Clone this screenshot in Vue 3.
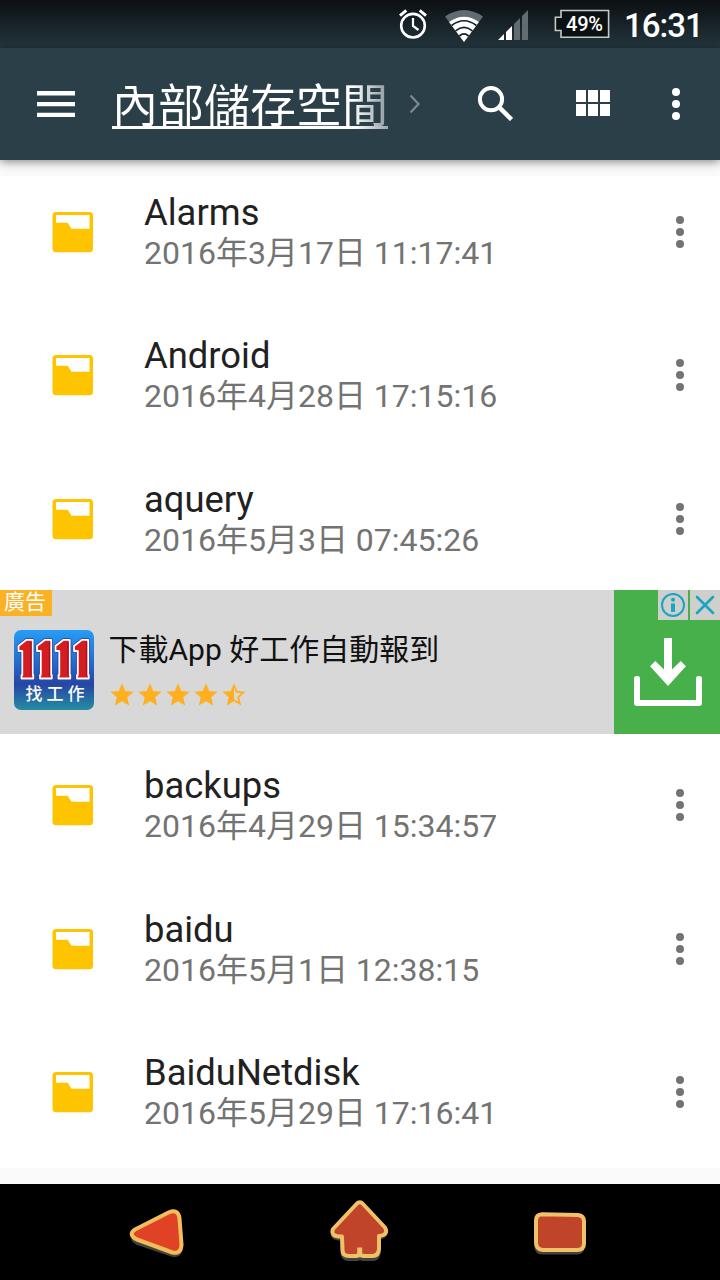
<script setup>
const before = [
  { name: 'Alarms', date: '2016年3月17日 11:17:41' },
  { name: 'Android', date: '2016年4月28日 17:15:16' },
  { name: 'aquery', date: '2016年5月3日 07:45:26' },
]
const after = [
  { name: 'backups', date: '2016年4月29日 15:34:57' },
  { name: 'baidu', date: '2016年5月1日 12:38:15' },
  { name: 'BaiduNetdisk', date: '2016年5月29日 17:16:41' },
]
const rows = [...before, { ad: true, name: 'ad' }, ...after]
const star = 'M12 17.27 18.18 21l-1.64-7.03L22 9.24l-7.19-.61L12 2 9.19 8.63 2 9.24l5.46 4.73L5.82 21z'
const halfStar = 'M22 9.24l-7.19-.62L12 2 9.19 8.63 2 9.24l5.46 4.73L5.82 21 12 17.27 18.18 21l-1.63-7.03L22 9.24zM12 15.4V6.1l1.71 4.04 4.38.38-3.32 2.88 1 4.28L12 15.4z'
</script>

<template>
  <div class="screen">
    <div class="status">
      <svg class="alarm" width="28" height="30" viewBox="399 9 28 30" fill="none" stroke="#fff">
        <circle cx="413" cy="25.7" r="11.8" stroke-width="2.6" />
        <path d="M413 18v8l5.5 4" stroke-width="2.2" />
        <path d="M400 15.6l6.3-5.2M426 15.6l-6.3-5.2" stroke-width="3" />
      </svg>
      <svg class="wifi" width="40" height="33" viewBox="444 9 40 33">
        <path d="M445 16.5Q464 3.5 483 16.5L464 42z" fill="#626b6f" />
        <path d="M449 22Q464 11.5 479 22L464 42z" fill="#fff" />
        <path d="M451.6 25.5Q464 16 476.400 25.5M455.600 30.800Q464 24 472.400 30.800M459.400 36Q464 31.800 468.600 36" fill="none" stroke="#172328" stroke-width="1.7" />
      </svg>
      <svg class="signal" width="31" height="31" viewBox="498 9 31 31">
        <path d="M498 40l6-6v6zM506 32l6-6v14h-6z" fill="#fff" />
        <path d="M514 24l6-6v22h-6zM522 16l6-6v30h-6z" fill="#626b6f" />
      </svg>
      <div class="battery">
        <svg width="56" height="29" viewBox="554 9 56 29" fill="#0b1113" stroke="#c4c8c9" stroke-width="1.6">
          <path d="M561 10.5h47.6v26.7H561v-6.7h-5.6V17.3h5.6z" />
        </svg>
        <span>49%</span>
      </div>
      <span class="clock">16:31</span>
    </div>

    <header class="bar">
      <svg class="menu" width="38" height="26" viewBox="0 0 38 26" fill="#fff">
        <path d="M0 0h38v4.5H0zM0 11h38v4.3H0zM0 21.8h38V26H0z" />
      </svg>
      <div class="crumb"><span>內部儲存空間</span></div>
      <svg class="chev" width="12" height="20" viewBox="0 0 12 20" fill="none" stroke="#7d898e" stroke-width="2.2">
        <path d="M1.5 1.5l8 8.5-8 8.5" />
      </svg>
      <svg class="search" width="36" height="36" viewBox="477 85 36 36" fill="none" stroke="#fff">
        <circle cx="491" cy="99.2" r="11.1" stroke-width="4" />
        <path d="M498.8 107l1.8 1.8" stroke-width="3.5" />
        <path d="M500 108.2l11.5 11.3" stroke-width="4.5" />
      </svg>
      <svg class="grid" width="34" height="26" viewBox="0 0 34 26" fill="#fff">
        <path d="M0 0h10v12H0zM12 0h10v12H12zM24 0h10v12H24zM0 14h10v12H0zM12 14h10v12H12zM24 14h10v12H24z" />
      </svg>
      <svg class="more" width="8" height="32" viewBox="0 0 8 32" fill="#fff">
        <circle cx="4" cy="4" r="4" /><circle cx="4" cy="16" r="4" /><circle cx="4" cy="28" r="4" />
      </svg>
    </header>

    <main class="content">
      <div class="list">
        <template v-for="row in rows" :key="row.name">
          <div v-if="!row.ad" class="row">
            <svg class="folder" width="42" height="42" viewBox="52 211 42 42">
              <rect x="52.5" y="212" width="40.5" height="40.3" rx="3.5" fill="#ffc400" />
              <path d="M56 215h33.5v13.7H71.5l-3.8-6H56z" fill="#fff" />
            </svg>
            <div class="text">
              <div class="name">{{ row.name }}</div>
              <div class="date">{{ row.date }}</div>
            </div>
            <svg width="8" height="32" viewBox="0 0 8 32" fill="#737373">
              <circle cx="4" cy="4" r="4" /><circle cx="4" cy="16" r="4" /><circle cx="4" cy="28" r="4" />
            </svg>
          </div>
          <div v-else class="ad">
            <span class="tag">廣告</span>
            <svg class="logo" width="80" height="80" viewBox="0 0 80 80">
              <defs>
                <linearGradient id="sky" x1="0" y1="0" x2="0" y2="1">
                  <stop offset="0" stop-color="#279cf4" /><stop offset=".3" stop-color="#2379dc" />
                  <stop offset=".68" stop-color="#2745a4" /><stop offset="1" stop-color="#248da2" />
                </linearGradient>
              </defs>
              <rect width="80" height="80" rx="7" fill="url(#sky)" />
              <g v-for="i in 4" :key="i" :transform="`translate(${(i - 1) * 18.5 - 0.5} 0)`">
                <path d="M5 16l8-6.200h6.200V45h.6v3.500H8V45h.8V21H5z" fill="#d51c20" stroke="#24428f" stroke-width="3.200" stroke-linejoin="round" />
                <path d="M5 16l8-6.200h6.200V45h.6v3.500H8V45h.8V21H5z" fill="#d51c20" stroke="#fff" stroke-width="1.800" stroke-linejoin="round" />
                <path d="M17.500 12v34" stroke="#9d1725" stroke-width="1.200" />
              </g>
              <text x="11.500" y="69.500" class="logo-text">找工作</text>
            </svg>
            <div class="ad-body">
              <div class="ad-title">下載App 好工作自動報到</div>
              <div class="stars">
                <svg v-for="i in 5" :key="i" width="28" height="28" viewBox="0 0 24 24" fill="#ffb020"><path :d="i < 5 ? star : halfStar" /></svg>
              </div>
            </div>
            <div class="cta">
              <div class="choices">
                <svg width="30" height="30" viewBox="0 0 30 30" fill="none" stroke="#18a5c6">
                  <circle cx="15" cy="15" r="11" stroke-width="2" />
                  <circle cx="15" cy="9.8" r="2" fill="#18a5c6" stroke="none" />
                  <path d="M13 13.5H17v8.400h-4z" fill="#18a5c6" stroke="none" />
                </svg>
                <svg width="30" height="30" viewBox="0 0 30 30" fill="none" stroke="#18a5c6" stroke-width="2.6" stroke-linecap="round">
                  <path d="M7 7l16 16M23 7L7 23" />
                </svg>
              </div>
              <svg class="download" width="68" height="68" viewBox="634 638 68 68">
                <path d="M664 638h8v31.5l8.7-8.5 5.2 5.3L668 686l-17.9-19.7 5.2-5.3 8.7 8.5z" fill="#fff" />
                <path d="M634 678.5q0-2.5 2.500-2.5h1q2.500 0 2.500 2.500V700h56v-21.500q0-2.500 2.500-2.500h1q2.500 0 2.500 2.500V703q0 3-3 3h-62q-3 0-3-3z" fill="#fff" />
              </svg>
            </div>
          </div>
        </template>
      </div>
    </main>

    <nav class="nav">
      <svg width="58" height="54" viewBox="128 1205.5 58 54" stroke-linejoin="round">
        <path d="M135 1236.5L171.5 1217Q178.500 1213.500 179.500 1222L181.500 1247Q181 1257 172.500 1255.500L137 1243.500Q130 1240 135 1236.500z" fill="#45443c" stroke="#45443c" stroke-width="3.5" />
        <path d="M135 1230L168.500 1213Q178.500 1209 179.500 1219L181.500 1245Q181 1255 172.500 1253L137 1240Q127.500 1235 135 1230z" fill="#df4224" stroke="#f4bd5b" stroke-width="4" />
      </svg>
      <svg width="60" height="64" viewBox="330 1199 60 64" stroke-linejoin="round">
        <path d="M357 1206.500Q360.500 1202.500 364.500 1206.500L386 1227.500Q389.500 1236 380 1237V1253Q379 1258.500 374 1258.500H364L361 1257.500 358 1258.500H349Q343 1258 343 1251L342.500 1238Q330 1238 334.500 1229.500z" fill="#45443c" stroke="#45443c" stroke-width="3" />
        <path d="M357.500 1203Q361 1199.500 364 1203L386 1226.500Q390 1234 380 1235V1248Q379.500 1255 373.500 1255H364.500L361 1254 357 1255H350Q343.500 1255 343.500 1249L343 1235.500Q331 1236 334 1228z" fill="#bf442a" stroke="#efc169" stroke-width="4" />
        <path d="M360.700 1246.500v8.500" stroke="#efc169" stroke-width="5" />
      </svg>
      <svg width="56" height="46" viewBox="532 1209.500 56 46">
        <rect x="534.5" y="1216" width="50" height="39" rx="7" fill="#45443c" />
        <path d="M542 1214.700L578 1215.500Q584 1216 584 1222V1244Q584 1250.500 577 1250.500H543Q536 1250 536 1243V1221Q536 1215 542 1214.700z" fill="#bf442a" stroke="#efc169" stroke-width="4" />
      </svg>
    </nav>
  </div>
</template>

<style>
body { background: #000; }
</style>

<style scoped>
.screen { width: 720px; height: 1280px; display: flex; flex-direction: column; overflow: hidden; background: #fafafa; font-family: Roboto, "Noto Sans CJK TC", sans-serif; }
svg { display: block; flex: none; }
.status { height: 48px; flex: none; display: flex; align-items: flex-start; padding: 9px 0 0 399px; box-sizing: border-box; background: linear-gradient(#0b1012, #23353d); color: #fff; }
.wifi { margin-left: 17px; }
.signal { margin-left: 14px; }
.battery { margin-left: 25px; position: relative; }
.battery span { position: absolute; left: 12px; top: 3px; font-size: 20px; line-height: 24px; font-weight: 500; letter-spacing: -.2px; }
.clock { margin: -3px 0 0 14px; font-size: 33px; line-height: 40px; font-weight: 500; letter-spacing: -1px; white-space: nowrap; }
.bar { height: 112px; flex: none; display: flex; align-items: center; background: #2b3f48; padding-left: 37px; box-sizing: border-box; box-shadow: 0 2px 9px rgba(0,0,0,.45); position: relative; z-index: 1; }
.crumb { margin-left: 37px; width: 276px; height: 50px; box-sizing: border-box; border-bottom: 3px solid; border-image: linear-gradient(90deg, #fff 87%, #9aa5aa) 1; }
.crumb span { display: block; margin-top: 1.5px; font-size: 46px; line-height: 50px; white-space: nowrap; color: transparent; background: linear-gradient(90deg, #fff 87%, #8d999e); -webkit-background-clip: text; background-clip: text; }
.chev { margin-left: 21px; }
.search { margin-left: 56px; margin-top: -2px; }
.grid { margin-left: 63px; margin-top: -2px; }
.more { margin-left: 62px; }
.content { height: 1024px; flex: none; padding-top: 16px; box-sizing: border-box; }
.list { height: 992px; background: #fff; display: flex; flex-direction: column; }
.list > * { flex: none; }
.row { height: 143.33px; display: flex; align-items: center; padding: 0 36px 0 52px; box-sizing: border-box; }
.row:first-child { margin-top: -15.67px; }
.text { flex: 1; margin-left: 50px; white-space: nowrap; }
.name { color: #212121; font-size: 36.4px; line-height: 42px; }
.date { color: #737373; font-size: 32px; line-height: 38px; }
.ad { height: 143.33px; display: flex; background: #d8d8d8; position: relative; }
.tag { position: absolute; left: 0; top: 0; width: 52px; height: 26px; box-sizing: border-box; padding-right: 2px; font-size: 21px; line-height: 25px; text-align: center; color: #fff; background: #fbb124; }
.logo { margin: 40px 0 0 14px; }
.logo-text { font-size: 17px; font-weight: 500; letter-spacing: 4px; fill: #fff; }
.ad-body { flex: 1; margin-left: 14.5px; padding-top: 40px; }
.ad-title { color: #111; font-size: 30px; line-height: 40px; white-space: nowrap; }
.stars { display: flex; margin-left: -.5px; margin-top: 10.5px; }
.cta { width: 106px; background: #48b04b; position: relative; }
.choices { position: absolute; right: 0; top: 0; display: flex; gap: 2px; }
.choices svg { background: #cfcfcb; }
.download { margin: 48px 0 0 20px; }
.nav { height: 96px; flex: none; background: #000; display: flex; justify-content: space-between; align-items: center; padding: 0 132px 0 128px; box-sizing: border-box; }
</style>
